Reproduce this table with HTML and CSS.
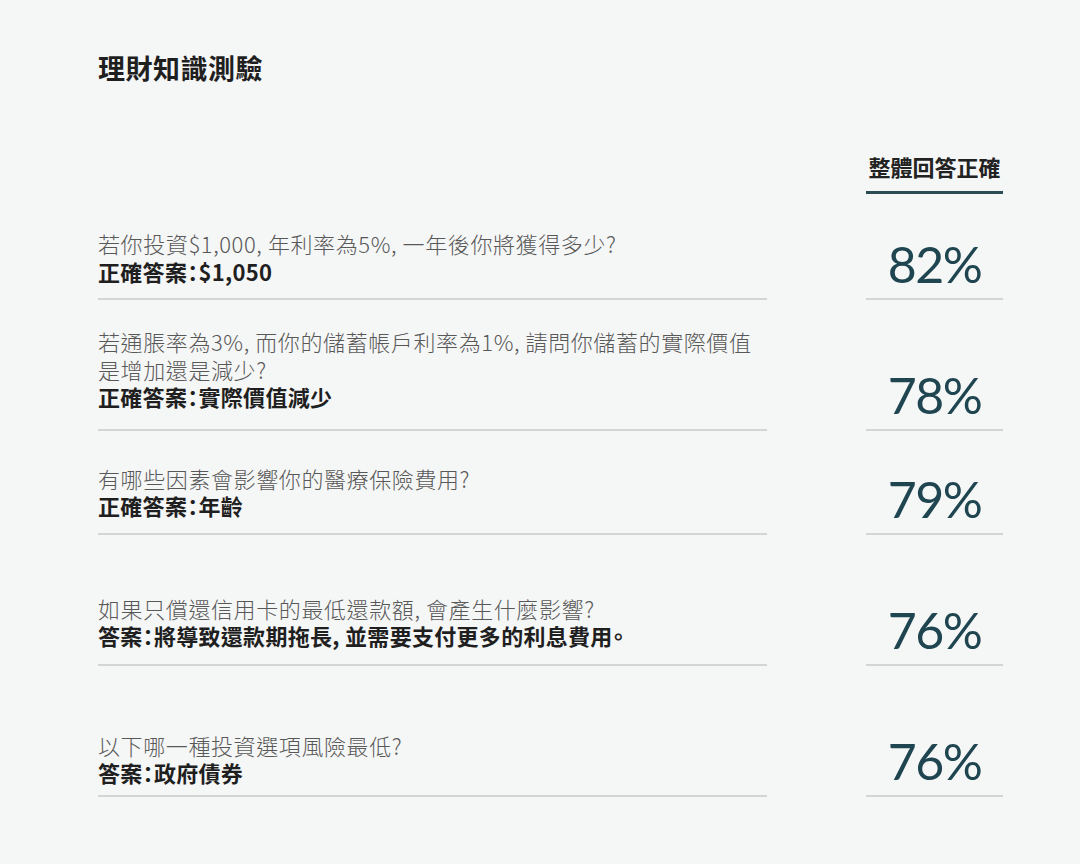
FILE: index.html
```html
<!DOCTYPE html>
<html lang="zh-Hant">
<head>
<meta charset="utf-8">
<title>理財知識測驗</title>
<link rel="stylesheet" href="styles.css">
</head>
<body>
<main class="page">
  <h1 class="title">理財知識測驗</h1>

  <div class="grid head">
    <div class="cell-empty"></div>
    <div class="head-label">整體回答正確</div>
  </div>

  <div class="grid row row--1">
    <div class="qa">
      <p class="q">若你投資$1,000, 年利率為5%, 一年後你將獲得多少?</p>
      <p class="a">正確答案：$1,050</p>
    </div>
    <div class="pct">82%</div>
  </div>

  <div class="grid row row--2">
    <div class="qa">
      <p class="q">若通脹率為3%, 而你的儲蓄帳戶利率為1%, 請問你儲蓄的實際價值是增加還是減少?</p>
      <p class="a">正確答案：實際價值減少</p>
    </div>
    <div class="pct">78%</div>
  </div>

  <div class="grid row row--3">
    <div class="qa">
      <p class="q">有哪些因素會影響你的醫療保險費用?</p>
      <p class="a">正確答案：年齡</p>
    </div>
    <div class="pct">79%</div>
  </div>

  <div class="grid row row--4">
    <div class="qa">
      <p class="q">如果只償還信用卡的最低還款額, 會產生什麼影響?</p>
      <p class="a">答案：將導致還款期拖長, 並需要支付更多的利息費用。</p>
    </div>
    <div class="pct">76%</div>
  </div>

  <div class="grid row row--5">
    <div class="qa">
      <p class="q">以下哪一種投資選項風險最低?</p>
      <p class="a">答案：政府債券</p>
    </div>
    <div class="pct">76%</div>
  </div>
</main>
</body>
</html>
```

FILE: styles.css
```css
* {
  box-sizing: border-box;
}

html, body {
  margin: 0;
  padding: 0;
  background: #f5f6f6;
}

body {
  font-family: "Noto Sans CJK TC", "Noto Sans", sans-serif;
  color: #222;
}

.page {
  width: 1080px;
  padding: 50px 77px 0 98px;
}

.title {
  margin: 0;
  font-size: 27px;
  line-height: 35px;
  font-weight: 700;
  letter-spacing: 0.5px;
  color: #1f1f1f;
}

.grid {
  display: grid;
  grid-template-columns: 669px 137px;
  column-gap: 99px;
  align-items: end;
}

.head {
  margin-top: 66px;
}

.head-label {
  font-size: 22px;
  line-height: 30px;
  font-weight: 700;
  text-align: center;
  color: #222;
  padding-bottom: 10px;
  border-bottom: 3px solid #2c4c55;
}

.qa {
  border-bottom: 2px solid #d3d5d5;
}

.q, .a {
  margin: 0;
  font-size: 22px;
  line-height: 27.5px;
}

.q {
  font-weight: 300;
  color: #585858;
  letter-spacing: 0.6px;
}

.a {
  font-weight: 700;
  color: #1f1f1f;
  letter-spacing: 0.3px;
  font-feature-settings: "halt";
}

.pct {
  font-family: Lato, "Noto Sans", sans-serif;
  font-weight: 400;
  font-size: 50px;
  line-height: 50px;
  letter-spacing: -1.5px;
  text-align: center;
  color: #1f4550;
  padding-bottom: 9px;
  border-bottom: 2px solid #d3d5d5;
}

.row--1 .qa { padding-top: 36px; padding-bottom: 13px; }
.row--2 .qa { padding-top: 28px; padding-bottom: 18px; }
.row--3 .qa { padding-top: 34px; padding-bottom: 13px; }
.row--4 .qa { padding-top: 60px; padding-bottom: 14px; }
.row--5 .qa { padding-top: 66px; padding-bottom: 8px; }
```
